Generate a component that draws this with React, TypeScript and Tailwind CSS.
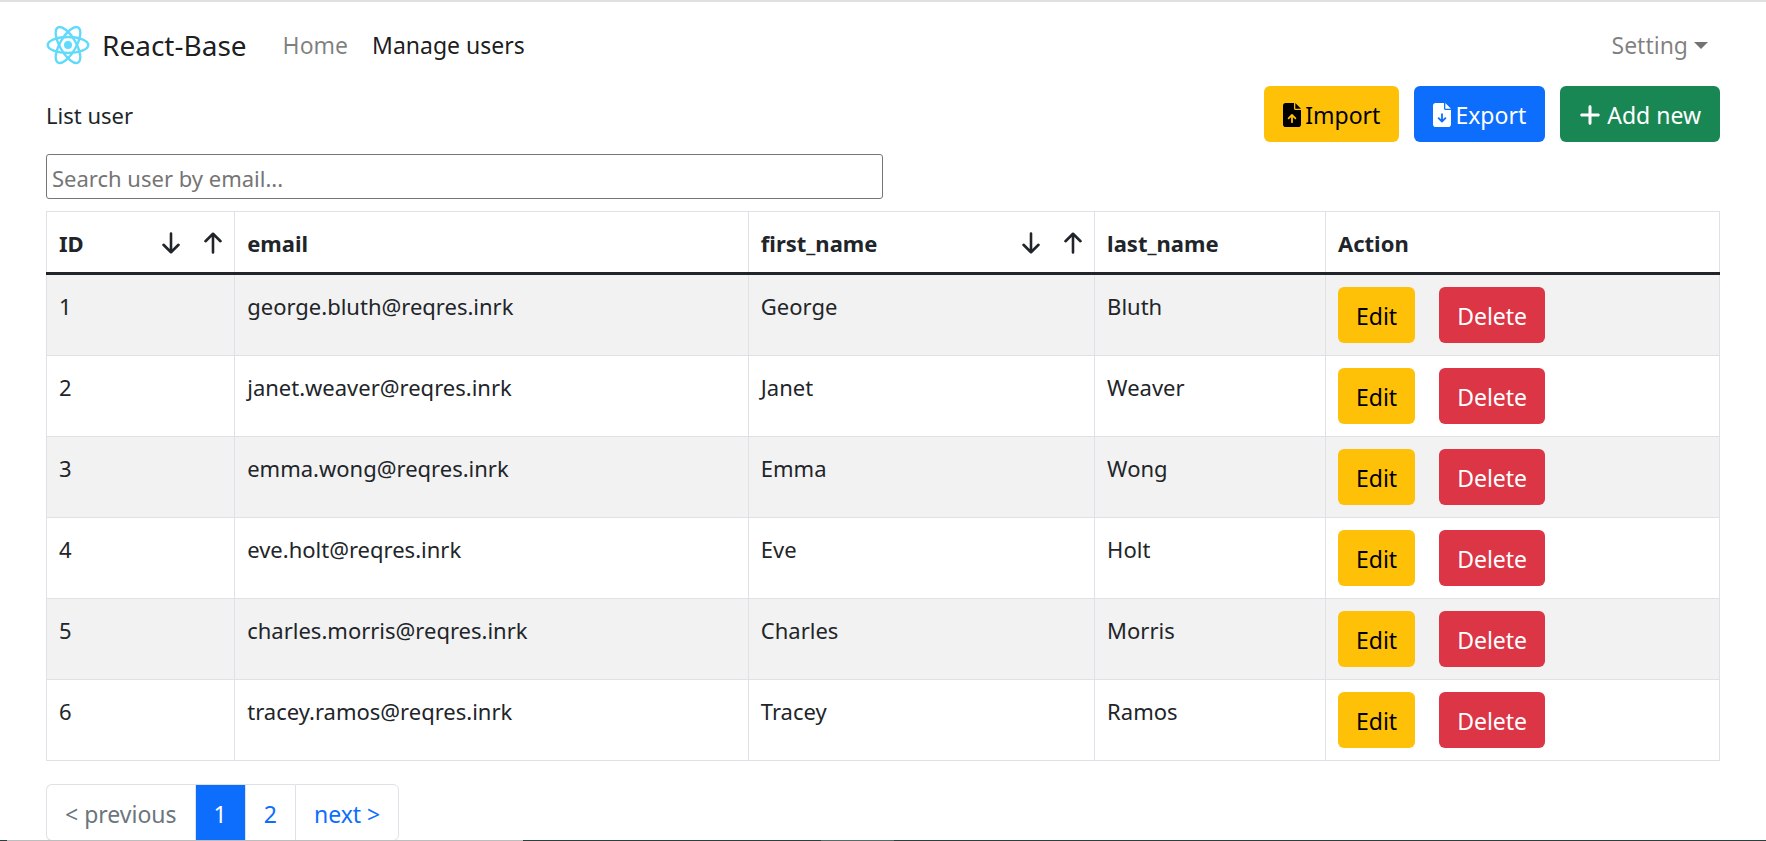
import { FaPlus } from "react-icons/fa6";

const users = [
  { id: 1, email: "george.bluth@reqres.inrk", first: "George", last: "Bluth" },
  { id: 2, email: "janet.weaver@reqres.inrk", first: "Janet", last: "Weaver" },
  { id: 3, email: "emma.wong@reqres.inrk", first: "Emma", last: "Wong" },
  { id: 4, email: "eve.holt@reqres.inrk", first: "Eve", last: "Holt" },
  { id: 5, email: "charles.morris@reqres.inrk", first: "Charles", last: "Morris" },
  { id: 6, email: "tracey.ramos@reqres.inrk", first: "Tracey", last: "Ramos" },
];

function ReactLogo() {
  return (
    <svg viewBox="-11.5 -10.4 23 20.8" className="h-10 w-11" fill="none" stroke="#61dafb" strokeWidth="1.25" aria-hidden="true">
      <circle r="2.1" fill="#61dafb" stroke="none" />
      <ellipse rx="10.6" ry="4.2" />
      <ellipse rx="10.6" ry="4.2" transform="rotate(60)" />
      <ellipse rx="10.6" ry="4.2" transform="rotate(120)" />
    </svg>
  );
}

function FileIcon({ arrow, arrowClass }: { arrow: string; arrowClass: string }) {
  return (
    <svg viewBox="0 0 18 24" className="h-6 w-[18px]" aria-hidden="true">
      <path
        fill="currentColor"
        d="M2.6 0H11v5.4c0 .9.6 1.5 1.5 1.5H18v14.5c0 1.5-1.1 2.6-2.6 2.6H2.6C1.1 24 0 22.9 0 21.4V2.6C0 1.1 1.1 0 2.6 0ZM12.3.1 18 5.7h-5.7Z"
      />
      <path d={arrow} className={arrowClass} fill="none" strokeWidth="1.8" strokeLinecap="round" strokeLinejoin="round" />
    </svg>
  );
}

function SortArrow({ d }: { d: string }) {
  return (
    <svg viewBox="0 0 18 22" className="h-[22px] w-[18px]" fill="none" stroke="currentColor" strokeWidth="2.6" strokeLinecap="round" strokeLinejoin="round" aria-hidden="true">
      <path d={d} />
    </svg>
  );
}

function SortHeading({ label }: { label: string }) {
  return (
    <div className="flex items-center justify-between">
      <span>{label}</span>
      <span className="flex gap-6">
        <button type="button" aria-label={`Sort ${label} descending`}>
          <SortArrow d="M9 1.5v18.5M1.5 12.8 9 20.2l7.5-7.4" />
        </button>
        <button type="button" aria-label={`Sort ${label} ascending`}>
          <SortArrow d="M9 20.5V2M1.5 9.2 9 1.8l7.5 7.4" />
        </button>
      </span>
    </div>
  );
}

const button = "flex h-14 items-center rounded-md pt-0.5 text-[23px]";
const th = "h-[62px] border border-b-[3px] border-[#dee2e6] border-b-[#212529] px-3 pt-px text-left font-bold";
const td = "border border-[#dee2e6] p-3 align-top leading-[38px]";
const page = "flex h-[57px] items-center border border-[#dee2e6] pt-0.5 text-[23px]";

export default function App() {
  return (
    <div className="flex h-screen flex-col bg-white font-['Noto_Sans','Open_Sans',sans-serif] text-[22px] leading-9 text-[#212529]">
      <div className="flex min-h-0 flex-1 flex-col overflow-hidden border-t-2 border-[#e0e0e0] px-[46px]">
        <nav className="flex h-[84px] shrink-0 items-center pr-3 pt-0.5 text-[23px]">
          <a href="#" className="flex items-center gap-3 text-[28px] text-black/90">
            <ReactLogo />
            React-Base
          </a>
          <a href="#home" className="ml-9 text-black/50">Home</a>
          <a href="#users" className="ml-6 text-black/90">Manage users</a>
          <button type="button" className="ml-auto flex items-center gap-1.5 text-black/50">
            Setting
            <span className="border-x-[7px] border-t-[7px] border-x-transparent border-t-black/55" />
          </button>
        </nav>

        <main>
          <div className="flex items-center justify-between">
            <span className="pt-0.5">List user</span>
            <div className="flex gap-[15px]">
              <button type="button" className={`${button} gap-1 bg-[#ffc107] px-[19px] text-black`}>
                <FileIcon arrow="M9 19.2v-7M5.6 15.3 9 12l3.4 3.3" arrowClass="stroke-[#ffc107]" />
                Import
              </button>
              <button type="button" className={`${button} gap-1 bg-[#0d6efd] px-[19px] text-white`}>
                <FileIcon arrow="M9 11.2v7M5.6 15.2 9 18.5l3.4-3.3" arrowClass="stroke-[#0d6efd]" />
                Export
              </button>
              <button type="button" className={`${button} gap-1.5 bg-[#198754] px-[19px] text-white`}>
                <FaPlus className="h-6 w-[22px]" />
                Add new
              </button>
            </div>
          </div>

          <input
            type="text"
            aria-label="Search user by email"
            placeholder="Search user by email..."
            className="mt-3 block h-[45px] w-1/2 rounded-[3px] border border-[#767676] px-[5px] pt-0.5 placeholder:text-[#757575]"
          />

          <table className="mt-3 w-full table-fixed border-collapse">
            <colgroup>
              <col className="w-[11.25%]" />
              <col className="w-[30.7%]" />
              <col className="w-[20.7%]" />
              <col className="w-[13.8%]" />
              <col />
            </colgroup>
            <thead>
              <tr>
                <th className={th}><SortHeading label="ID" /></th>
                <th className={th}>email</th>
                <th className={th}><SortHeading label="first_name" /></th>
                <th className={th}>last_name</th>
                <th className={th}>Action</th>
              </tr>
            </thead>
            <tbody>
              {users.map((user) => (
                <tr key={user.id} className="odd:bg-[#f2f2f2]">
                  <td className={td}>{user.id}</td>
                  <td className={td}>{user.email}</td>
                  <td className={td}>{user.first}</td>
                  <td className={td}>{user.last}</td>
                  <td className={td}>
                    <div className="flex gap-6">
                      <button type="button" className={`${button} bg-[#ffc107] px-[18px] text-black`}>Edit</button>
                      <button type="button" className={`${button} bg-[#dc3545] px-[18px] text-white`}>Delete</button>
                    </div>
                  </td>
                </tr>
              ))}
            </tbody>
          </table>

          <nav aria-label="Pages" className="mt-[23px] flex">
            <a href="#previous" className={`${page} rounded-l-md border-r-0 px-[18px] text-[#6c757d]`}>&lt; previous</a>
            <a href="#1" aria-current="page" className={`${page} border-[#0d6efd] bg-[#0d6efd] px-[18px] text-white`}>1</a>
            <a href="#2" className={`${page} border-x-0 px-[18px] text-[#0d6efd]`}>2</a>
            <a href="#next" className={`${page} rounded-r-md px-[18px] text-[#0d6efd]`}>next &gt;</a>
          </nav>
        </main>
      </div>
      <div className="flex h-px shrink-0">
        <div className="w-[7px] bg-[#2c403b]" />
        <div className="w-[29.2%] bg-[#bdbdbd]" />
        <div className="w-[16.9%] bg-[#2c403b]" />
        <div className="w-[4.1%] bg-[#556b66]" />
        <div className="flex-1 bg-[#2c403b]" />
      </div>
    </div>
  );
}
